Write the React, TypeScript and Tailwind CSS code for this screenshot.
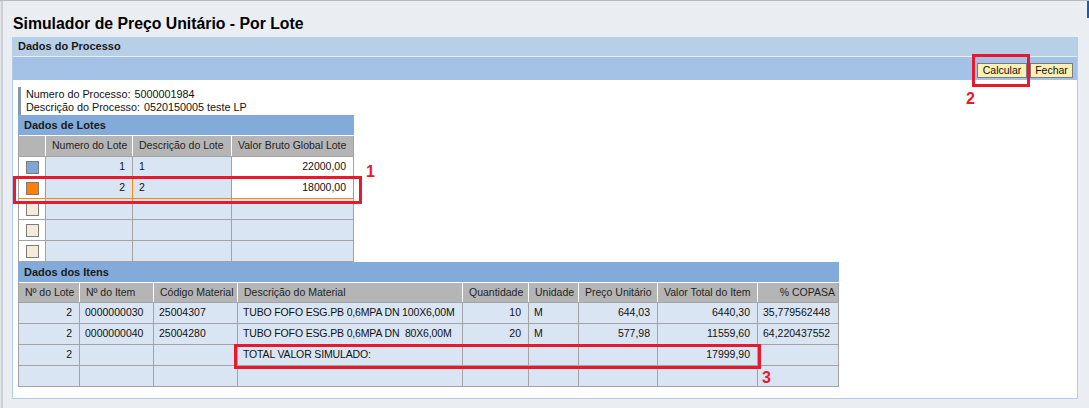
import React from 'react';

type Align = 'l' | 'r';

const lotCols = [27, 87, 99, 122];
const itemCols = [61, 74, 84, 225, 66, 50, 79, 100, 81];

const itemHead: [string, Align][] = [
  ['Nº do Lote', 'l'],
  ['Nº do Item', 'l'],
  ['Código Material', 'l'],
  ['Descrição do Material', 'l'],
  ['Quantidade', 'l'],
  ['Unidade', 'l'],
  ['Preço Unitário', 'l'],
  ['Valor Total do Item', 'l'],
  ['% COPASA', 'r'],
];

const itemAlign: Align[] = ['r', 'l', 'l', 'l', 'r', 'l', 'r', 'r', 'l'];

const itemRows: string[][] = [
  ['2', '0000000030', '25004307', 'TUBO FOFO ESG.PB 0,6MPA DN 100X6,00M', '10', 'M', '644,03', '6440,30', '35,779562448'],
  ['2', '0000000040', '25004280', 'TUBO FOFO ESG.PB 0,6MPA DN  80X6,00M', '20', 'M', '577,98', '11559,60', '64,220437552'],
  ['2', '', '', 'TOTAL VALOR SIMULADO:', '', '', '', '17999,90', ''],
  ['', '', '', '', '', '', '', '', ''],
];

const lotRows = [
  { n: '1', d: '1', v: '22000,00', box: 'bg-[#7ea7d8]', sel: false, input: true },
  { n: '2', d: '2', v: '18000,00', box: 'bg-[#ff7f00]', sel: true, input: true },
  { n: '', d: '', v: '', box: 'bg-[#f4ecd8]', sel: false, input: false },
  { n: '', d: '', v: '', box: 'bg-[#f4ecd8]', sel: false, input: false },
  { n: '', d: '', v: '', box: 'bg-[#f4ecd8]', sel: false, input: false },
];

function HeadCell({ w, text, align }: { w: number; text: string; align: Align }) {
  return (
    <div
      style={{ width: w }}
      className={`h-full shrink-0 flex items-center whitespace-nowrap overflow-hidden border-r border-white ${
        align === 'r' ? 'justify-end pr-[3px]' : 'pl-[6px]'
      }`}
    >
      {text}
    </div>
  );
}

function SectionBar({ title }: { title: string }) {
  return (
    <div className="h-[20px] bg-[#82abd9] flex items-center pl-[6px] font-bold text-[11px] text-[#1a1a1a]">
      {title}
    </div>
  );
}

function LotesTable() {
  return (
    <div className="w-[336px]">
      <SectionBar title="Dados de Lotes" />
      <div className="border-l border-[#a3a3a3]">
        <div className="h-[22px] flex bg-[#b5b5b5] border-t border-white border-b border-b-[#a3a3a3] text-[10.5px] text-[#1f1f1f]">
          <HeadCell w={lotCols[0]} text="" align="l" />
          <HeadCell w={lotCols[1]} text="Numero do Lote" align="l" />
          <HeadCell w={lotCols[2]} text="Descrição do Lote" align="l" />
          <div style={{ width: lotCols[3] }} className="h-full shrink-0 flex items-center pl-[6px] whitespace-nowrap border-r border-[#a3a3a3]">
            Valor Bruto Global Lote
          </div>
        </div>
        {lotRows.map((r, i) => {
          const bc = r.sel ? 'border-[#ff8a00]' : 'border-[#a3a3a3]';
          return (
            <div key={i} className={`h-[21px] flex text-[10.5px] text-[#111] ${r.sel ? 'border-y border-[#ff8a00] -mt-px h-[22px]' : 'border-b border-[#a3a3a3]'}`}>
              <div style={{ width: lotCols[0] }} className={`h-full shrink-0 bg-white border-r ${bc} flex items-center pl-[7px]`}>
                <div className={`w-[13px] h-[13px] border border-[#7b7b7b] ${r.box}`} />
              </div>
              <div style={{ width: lotCols[1] }} className={`h-full shrink-0 bg-[#dae5f3] border-r ${bc} flex items-center justify-end pr-[7px]`}>
                {r.n}
              </div>
              <div style={{ width: lotCols[2] }} className={`h-full shrink-0 bg-[#dae5f3] border-r ${bc} flex items-center pl-[6px]`}>
                {r.d}
              </div>
              <div
                style={{ width: lotCols[3] }}
                className={`h-full shrink-0 border-r ${bc} flex items-center justify-end pr-[7px] ${r.input ? 'bg-white' : 'bg-[#dae5f3]'}`}
              >
                {r.v}
              </div>
            </div>
          );
        })}
      </div>
    </div>
  );
}

function ItensTable() {
  return (
    <div className="w-[821px]">
      <SectionBar title="Dados dos Itens" />
      <div className="border-l border-[#a3a3a3]">
        <div className="h-[21px] flex bg-[#b5b5b5] border-t border-white border-b border-b-[#a3a3a3] text-[10.5px] text-[#1f1f1f]">
          {itemHead.map(([t, a], i) => (
            <div
              key={i}
              style={{ width: itemCols[i] }}
              className={`h-full shrink-0 flex items-center whitespace-nowrap overflow-hidden border-r ${
                i === itemHead.length - 1 ? 'border-[#a3a3a3]' : 'border-white'
              } ${a === 'r' ? 'justify-end pr-[3px]' : 'pl-[6px]'}`}
            >
              {t}
            </div>
          ))}
        </div>
        {itemRows.map((r, ri) => (
          <div key={ri} className="h-[21px] flex border-b border-[#a3a3a3] bg-[#dae5f3] text-[10.5px] text-[#111]">
            {r.map((c, ci) => (
              <div
                key={ci}
                style={{ width: itemCols[ci] }}
                className={`h-full shrink-0 flex items-center whitespace-pre overflow-hidden border-r border-[#a3a3a3] ${
                  itemAlign[ci] === 'r' ? 'justify-end pr-[7px]' : 'pl-[5px]'
                } ${ci === 3 ? 'tracking-[-0.15px]' : ''}`}
              >
                {c}
              </div>
            ))}
          </div>
        ))}
      </div>
    </div>
  );
}

function Btn({ label, w }: { label: string; w: number }) {
  return (
    <button
      style={{ width: w }}
      className="h-[15px] bg-[#fdeeb4] border border-[#7a7a7a] text-[10.5px] leading-[13px] text-[#111] flex items-center justify-center"
    >
      {label}
    </button>
  );
}

export default function App() {
  return (
    <div className="relative w-[1089px] h-[408px] bg-[#eaeef2] border-t border-[#b7bbbf] flex font-['Liberation_Sans','Arial',sans-serif] overflow-hidden">
      {/* borda esquerda da janela */}
      <div className="w-[3px] h-full bg-[#ccd0d4] border-l border-[#e4e7ea]" />

      <div className="flex-1 flex flex-col pl-[9px]">
        <div className="h-[36px] pl-[1px] pt-[14px] text-[15.8px] leading-[18px] font-bold text-black">
          Simulador de Preço Unitário - Por Lote
        </div>

        <div className="w-[1066px] h-[362px] bg-white border-x border-b border-[#b3cde8] flex flex-col">
          <div className="h-[19px] bg-[#b8cfe8] flex items-center pl-[5px] font-bold text-[11px] text-[#1a1a1a]">
            Dados do Processo
          </div>
          <div className="h-px bg-[#e6eef7]" />
          <div className="h-[23px] bg-[#a4c2e6] flex justify-end items-start pt-[6px] pr-[4px] gap-[3px]">
            <Btn label="Calcular" w={50} />
            <Btn label="Fechar" w={43} />
          </div>

          <div className="pl-[5px] pt-[7px] flex flex-col">
            <div className="h-[28px] border-l-[3px] border-[#8796aa] pl-[5px] pt-px text-[10.8px] leading-[13px] text-[#111]">
              <div>
                Numero do Processo:<span className="ml-[4px]">5000001984</span>
              </div>
              <div>
                Descrição do Processo:<span className="ml-[4px]">0520150005 teste LP</span>
              </div>
            </div>
            <LotesTable />
            <ItensTable />
          </div>
        </div>
      </div>

      <div className="w-[3px] h-full">
        <div className="ml-px w-[2px] h-[17px] bg-[#1f5aa8]" />
      </div>

      {/* marcações em vermelho */}
      <div className="absolute left-[13px] top-[175px] w-[349px] h-[28px] border-[3px] border-[#e8192c]" />
      <div className="absolute left-[366px] top-[162px] text-[16px] leading-[18px] font-bold text-[#e8192c]">1</div>

      <div className="absolute left-[972px] top-[53px] w-[58px] h-[33px] border-[3px] border-[#e8192c]" />
      <div className="absolute left-[966px] top-[89px] text-[16px] leading-[18px] font-bold text-[#e8192c]">2</div>

      <div className="absolute left-[234px] top-[343px] w-[527px] h-[25px] border-[3px] border-[#e8192c]" />
      <div className="absolute left-[762px] top-[368px] text-[16px] leading-[18px] font-bold text-[#e8192c]">3</div>
    </div>
  );
}
